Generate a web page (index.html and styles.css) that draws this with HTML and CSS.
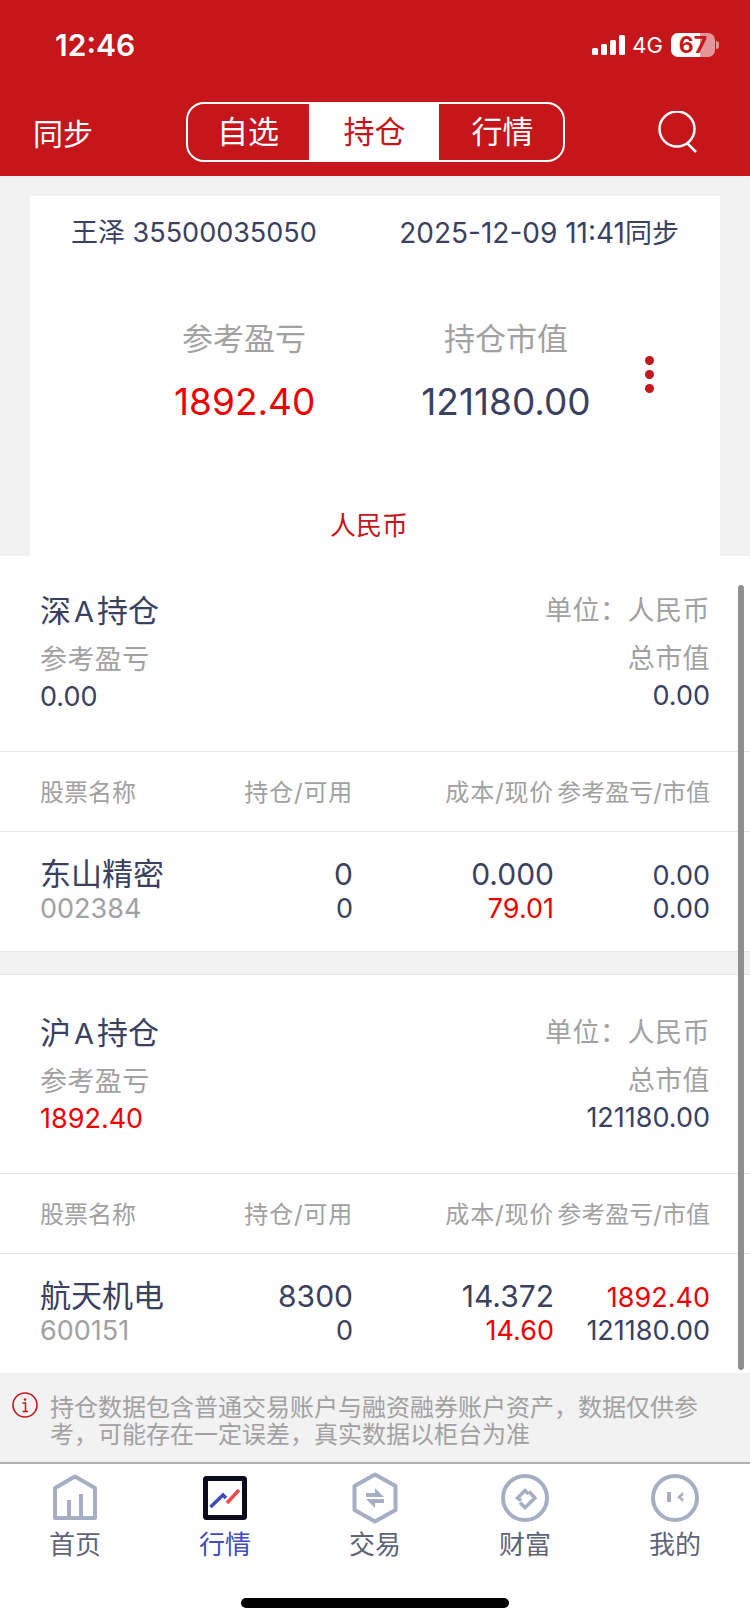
FILE: index.html
```html
<!DOCTYPE html>
<html lang="zh-CN">
<head>
    <meta charset="utf-8">
    <title>持仓</title>
    <link rel="stylesheet" href="styles.css">
</head>
<body>
    <div class="phone">
        <header class="top">
            <div class="status">
                <span class="time">12:46</span>
                <div class="status-right">
                    <svg class="signal" width="33" height="20" viewBox="0 0 33 20">
                        <rect x="0" y="13" width="6" height="7" rx="1.5"/>
                        <rect x="9" y="9" width="6" height="11" rx="1.5"/>
                        <rect x="18" y="5" width="6" height="15" rx="1.5"/>
                        <rect x="27" y="0" width="6" height="20" rx="1.5"/>
                    </svg>
                    <span class="net">4G</span>
                    <div class="battery"><span>67</span></div>
                    <i class="battery-tip"></i>
                </div>
            </div>
            <nav class="nav">
                <span class="nav-left">同步</span>
                <div class="tabs">
                    <span class="tab">自选</span>
                    <span class="tab tab-active">持仓</span>
                    <span class="tab tab-last">行情</span>
                </div>
                <svg class="search" width="40" height="42" viewBox="0 0 40 42">
                    <circle cx="19" cy="18" r="17.5"/>
                    <line x1="29" y1="32" x2="38" y2="41"/>
                </svg>
            </nav>
        </header>

        <div class="account-wrap">
            <section class="account">
                <div class="account-top">
                    <span>王泽 35500035050</span>
                    <span><span class="account-date">2025-12-09 11:41</span>同步</span>
                </div>
                <div class="account-sums">
                    <div class="sum sum-pnl">
                        <div class="sum-label">参考盈亏</div>
                        <div class="sum-value red">1892.40</div>
                    </div>
                    <div class="sum sum-mv">
                        <div class="sum-label">持仓市值</div>
                        <div class="sum-value">121180.00</div>
                    </div>
                    <div class="dots"><i></i><i></i><i></i></div>
                </div>
                <div class="currency">人民币</div>
            </section>
        </div>

        <main class="list">
            <div class="scrollbar"></div>

            <section class="summary">
                <div class="summary-col">
                    <div class="summary-title">深<span class="market">A</span>持仓</div>
                    <div class="summary-label">参考盈亏</div>
                    <div class="summary-value">0.00</div>
                </div>
                <div class="summary-col align-right">
                    <div class="summary-unit">单位：人民币</div>
                    <div class="summary-label">总市值</div>
                    <div class="summary-value">0.00</div>
                </div>
            </section>
            <div class="table-head">
                <span>股票名称</span>
                <span class="align-right head-spaced">持仓/可用</span>
                <span class="align-right head-spaced">成本/现价</span>
                <span class="align-right">参考盈亏/市值</span>
            </div>
            <div class="stock">
                <div>
                    <div class="stock-name">东山精密</div>
                    <div class="stock-code">002384</div>
                </div>
                <div class="align-right">
                    <div class="big">0</div>
                    <div class="small">0</div>
                </div>
                <div class="align-right">
                    <div class="big">0.000</div>
                    <div class="small red">79.01</div>
                </div>
                <div class="align-right">
                    <div class="mid">0.00</div>
                    <div class="small">0.00</div>
                </div>
            </div>

            <div class="band"></div>

            <section class="summary summary-second">
                <div class="summary-col">
                    <div class="summary-title">沪<span class="market">A</span>持仓</div>
                    <div class="summary-label">参考盈亏</div>
                    <div class="summary-value red">1892.40</div>
                </div>
                <div class="summary-col align-right">
                    <div class="summary-unit">单位：人民币</div>
                    <div class="summary-label">总市值</div>
                    <div class="summary-value">121180.00</div>
                </div>
            </section>
            <div class="table-head">
                <span>股票名称</span>
                <span class="align-right head-spaced">持仓/可用</span>
                <span class="align-right head-spaced">成本/现价</span>
                <span class="align-right">参考盈亏/市值</span>
            </div>
            <div class="stock">
                <div>
                    <div class="stock-name">航天机电</div>
                    <div class="stock-code">600151</div>
                </div>
                <div class="align-right">
                    <div class="big">8300</div>
                    <div class="small">0</div>
                </div>
                <div class="align-right">
                    <div class="big">14.372</div>
                    <div class="small red">14.60</div>
                </div>
                <div class="align-right">
                    <div class="mid red">1892.40</div>
                    <div class="small">121180.00</div>
                </div>
            </div>
        </main>

        <div class="notice">
            <svg class="notice-icon" width="26" height="26" viewBox="0 0 26 26">
                <circle cx="13" cy="13" r="12" fill="none" stroke="#c8161d" stroke-width="1.6"/>
                <circle cx="13" cy="7.5" r="1.3" fill="#c8161d"/>
                <path d="M10.5 11h3v8M10.5 19.5h5.5" fill="none" stroke="#c8161d" stroke-width="1.5"/>
            </svg>
            <p>持仓数据包含普通交易账户与融资融券账户资产，数据仅供参考，可能存在一定误差，真实数据以柜台为准</p>
        </div>

        <footer class="tabbar">
            <div class="tabbar-item">
                <svg width="46" height="52" viewBox="0 0 46 52">
                    <path d="M3 46V16L23 4.500 43 16v30z" fill="none" stroke="#a5aec3" stroke-width="4" stroke-linejoin="round"/>
                    <path d="M17 46V28M29 46V22" stroke="#a5aec3" stroke-width="4" fill="none"/>
                </svg>
                <span>首页</span>
            </div>
            <div class="tabbar-item tabbar-active">
                <svg width="46" height="52" viewBox="0 0 46 52">
                    <rect x="3.500" y="6.500" width="39" height="39" rx="1" fill="#fff" stroke="#0b0b1e" stroke-width="5"/>
                    <path d="M8.500 35L21 23l3 3" fill="none" stroke="#3f4cc0" stroke-width="3.500"/>
                    <path d="M25 31l12-13" fill="none" stroke="#f04a4a" stroke-width="3.500"/>
                </svg>
                <span>行情</span>
            </div>
            <div class="tabbar-item">
                <svg width="46" height="52" viewBox="0 0 46 52">
                    <path d="M23 2.500L43.500 14v24L23 49.500 2.500 38V14z" fill="none" stroke="#a5aec3" stroke-width="4" stroke-linejoin="round"/>
                    <polygon points="14,25 32,25 23,16 23,21 14,21" fill="#a5aec3"/>
                    <polygon points="32,27 14,27 23,36 23,31 32,31" fill="#a5aec3"/>
                </svg>
                <span>交易</span>
            </div>
            <div class="tabbar-item">
                <svg width="50" height="52" viewBox="0 0 50 52">
                    <circle cx="25" cy="26" r="22" fill="none" stroke="#a5aec3" stroke-width="4"/>
                    <path d="M29 19.500L35 26l-10 9.500-5-5" fill="none" stroke="#a5aec3" stroke-width="3.500"/>
                    <path d="M21 28.500L17.500 26 25 18.500l3.500 3.500" fill="none" stroke="#a5aec3" stroke-width="3.500"/>
                </svg>
                <span>财富</span>
            </div>
            <div class="tabbar-item">
                <svg width="50" height="52" viewBox="0 0 50 52">
                    <circle cx="25" cy="26" r="22" fill="none" stroke="#a5aec3" stroke-width="4"/>
                    <rect x="17" y="20" width="4" height="10" fill="#a5aec3"/>
                    <polygon points="33,20 27,25 33,30 33.500,27 31,25 33.500,23" fill="#a5aec3"/>
                </svg>
                <span>我的</span>
            </div>
            <div class="home-bar"></div>
        </footer>
    </div>
</body>
</html>
```

FILE: styles.css
```css
:root {
    --red: #c5161c;
    --loss: #ee0000;
    --text: #3a4160;
    --muted: #a1a1a1;
    --line: #e6e6e6;
    --bg: #f2f2f2;
}

* {
    box-sizing: border-box;
}

body {
    margin: 0;
    background: #fff;
    color: var(--text);
    font-family: Inter, "Noto Sans CJK SC", sans-serif;
}

.phone {
    width: 750px;
    height: 1624px;
    overflow: hidden;
    display: flex;
    flex-direction: column;
}

.red {
    color: var(--loss);
}

.align-right {
    text-align: right;
}

/* header */
.top {
    height: 176px;
    background: var(--red);
    color: #fff;
}

.status {
    height: 100px;
    padding: 24px 31px 0 55px;
    display: flex;
    justify-content: space-between;
    align-items: flex-start;
}

.time {
    font-size: 30px;
    font-weight: 600;
    line-height: 42px;
}

.status-right {
    display: flex;
    align-items: center;
    height: 42px;
}

.signal {
    fill: #fff;
}

.net {
    font-size: 22px;
    margin: 0 8px 0 7px;
}

.battery {
    width: 44px;
    height: 24px;
    border-radius: 7px;
    background: linear-gradient(90deg, #fff 66%, rgba(255, 255, 255, 0.55) 66%);
    color: var(--red);
    font-size: 23px;
    font-weight: 700;
    line-height: 24px;
    text-align: center;
}

.battery-tip {
    width: 3px;
    height: 8px;
    margin-left: 1px;
    border-radius: 0 3px 3px 0;
    background: rgba(255, 255, 255, 0.55);
}

.nav {
    display: grid;
    grid-template-columns: 1fr auto 1fr;
    align-items: center;
    height: 60px;
    margin-top: 2px;
    padding: 0 52px 0 33px;
}

.nav-left {
    font-size: 30px;
}

.tabs {
    display: flex;
    width: 379px;
    height: 60px;
    border: 2px solid #fff;
    border-radius: 18px;
    margin-left: 19px;
    overflow: hidden;
}

.tab {
    width: 121px;
    text-align: center;
    font-size: 31px;
    line-height: 56px;
}

.tab-active {
    width: 130px;
    padding-left: 2px;
    background: #fff;
    color: var(--red);
}

.tab-last {
    width: 124px;
    padding-left: 4px;
}

.search {
    justify-self: end;
    fill: none;
    stroke: #fff;
    stroke-width: 2.500;
}

/* account card */
.account-wrap {
    height: 380px;
    padding: 20px 30px 0;
    background: var(--bg);
}

.account {
    height: 360px;
    background: #fff;
    display: flex;
    flex-direction: column;
}

.account-top {
    display: flex;
    justify-content: space-between;
    padding: 17px 41px 0 41px;
    font-size: 27px;
    line-height: 40px;
}

.account-date {
    font-size: 28px;
}

.account-sums {
    display: flex;
    margin-top: 63px;
    height: 118px;
}

.sum {
    text-align: center;
}

.sum-pnl {
    width: 140px;
    margin-left: 144px;
}

.sum-mv {
    width: 170px;
    margin-left: 107px;
}

.sum-label {
    font-size: 31px;
    line-height: 44px;
    color: var(--muted);
    white-space: nowrap;
}

.sum-value {
    font-size: 37px;
    line-height: 50px;
    margin-top: 16px;
}

.dots {
    display: flex;
    flex-direction: column;
    gap: 5px;
    margin: 39px 0 0 54px;
}

.dots i {
    width: 9px;
    height: 9px;
    border-radius: 50%;
    background: var(--red);
}

.currency {
    margin-top: 71px;
    padding-right: 12px;
    text-align: center;
    color: var(--red);
    font-size: 26px;
    line-height: 40px;
}

/* holdings list */
.list {
    position: relative;
    height: 817px;
    background: #fff;
}

.scrollbar {
    position: absolute;
    top: 29px;
    right: 6px;
    width: 6px;
    height: 785px;
    border-radius: 3px;
    background: #8f8f8f;
}

.summary {
    display: flex;
    justify-content: space-between;
    height: 196px;
    padding: 35px 40px 0;
    border-bottom: 1px solid var(--line);
}

.summary-second {
    height: 199px;
    padding-top: 38px;
}

.summary-title {
    font-size: 31px;
    line-height: 40px;
}

.market {
    margin: 0 3px;
    font-size: 29px;
}

.summary-unit {
    font-size: 27px;
    line-height: 40px;
    letter-spacing: 0.5px;
    color: var(--muted);
}

.summary-label {
    margin-top: 8px;
    font-size: 27px;
    line-height: 40px;
    letter-spacing: 0.4px;
    color: var(--muted);
}

.summary-value {
    font-size: 27px;
    line-height: 34px;
}

.table-head,
.stock {
    display: grid;
    grid-template-columns: 171px 142px 201px 156px;
    padding: 0 40px;
}

.table-head {
    height: 80px;
    padding-bottom: 3px;
    align-items: center;
    border-bottom: 1px solid var(--line);
    font-size: 24px;
    color: var(--muted);
    white-space: nowrap;
}

.head-spaced {
    letter-spacing: 0.8px;
}

.stock {
    height: 119px;
    padding-top: 24px;
}

.stock-name {
    font-size: 31px;
    line-height: 36px;
}

.stock-code {
    font-size: 27px;
    line-height: 34px;
    color: var(--muted);
}

.big {
    font-size: 30px;
    line-height: 36px;
}

.mid {
    font-size: 27px;
    line-height: 40px;
}

.small {
    font-size: 27px;
    line-height: 34px;
}

.mid + .small {
    margin-top: -4px;
}

.band {
    height: 24px;
    background: var(--bg);
    border-top: 1px solid var(--line);
    border-bottom: 1px solid var(--line);
}

/* risk notice */
.notice {
    height: 91px;
    display: flex;
    gap: 12px;
    padding: 20px 25px 0 12px;
    background: var(--bg);
    border-bottom: 2px solid #b0b0b0;
}

.notice-icon {
    flex: none;
    margin-top: -1px;
}

.notice p {
    margin: 1px 0 0;
    font-size: 24px;
    line-height: 27px;
    color: var(--muted);
}

/* bottom tabs */
.tabbar {
    flex: 1;
    position: relative;
    display: flex;
    padding-top: 8px;
    background: #fff;
}

.tabbar-item {
    width: 150px;
    display: flex;
    flex-direction: column;
    align-items: center;
    color: #5e6478;
    font-size: 26px;
    line-height: 36px;
}

.tabbar-item svg {
    margin-bottom: 3px;
}

.tabbar-active {
    color: #3f4cc0;
}

.home-bar {
    position: absolute;
    left: 241px;
    bottom: 16px;
    width: 268px;
    height: 10px;
    border-radius: 5px;
    background: #000;
}
```
